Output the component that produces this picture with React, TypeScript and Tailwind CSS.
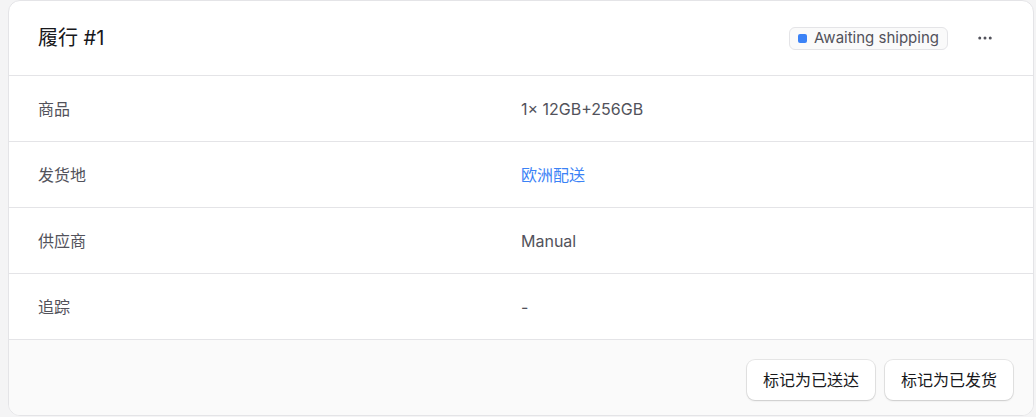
import React from 'react';
import { MoreHorizontal } from 'lucide-react';

const rows: { label: string; value: string; link?: boolean }[] = [
  { label: '商品', value: '1× 12GB+256GB' },
  { label: '发货地', value: '欧洲配送', link: true },
  { label: '供应商', value: 'Manual' },
  { label: '追踪', value: '-' },
];

export default function App() {
  return (
    <div
      className="min-h-screen bg-[#f4f4f5] pl-2 pr-[2px]"
      style={{ fontFamily: 'Inter, "Noto Sans CJK SC", sans-serif' }}
    >
      <div className="bg-white rounded-xl border border-[#e4e4e7] overflow-hidden h-[416px] flex flex-col">
        {/* Header */}
        <div className="h-[75px] flex items-center justify-between pl-[29px] pr-[34px] border-b border-[#e4e4e7]">
          <h2 className="text-[20px] text-[#18181b]">履行 #1</h2>
          <div className="flex items-center gap-[23px]">
            <div className="flex items-center gap-[7px] h-[23px] px-[8px] rounded-md border border-[#e4e4e7] bg-[#fafafa]">
              <span className="w-[9px] h-[9px] rounded-[2px] bg-[#3b82f6]" />
              <span className="text-[15px] text-[#52525b]">Awaiting shipping</span>
            </div>
            <button className="w-[28px] h-[28px] flex items-center justify-center text-[#52525b]">
              <MoreHorizontal size={18} strokeWidth={2} />
            </button>
          </div>
        </div>

        {/* Rows */}
        {rows.map((row) => (
          <div
            key={row.label}
            className="grid grid-cols-2 h-[66px] items-center px-[29px] border-b border-[#e4e4e7] text-[16px]"
          >
            <span className="text-[#52525b]">{row.label}</span>
            <span className={row.link ? 'text-[#3b82f6]' : 'text-[#52525b]'}>{row.value}</span>
          </div>
        ))}

        {/* Footer */}
        <div className="flex-1 bg-[#fafafa] flex items-start justify-end gap-[10px] pt-[20px] pr-[20px]">
          <button className="h-[40px] px-[16px] rounded-lg bg-white text-[16px] text-[#18181b] shadow-[0_0_0_1px_rgba(0,0,0,0.08),0_1px_2px_rgba(0,0,0,0.12)]">
            标记为已送达
          </button>
          <button className="h-[40px] px-[16px] rounded-lg bg-white text-[16px] text-[#18181b] shadow-[0_0_0_1px_rgba(0,0,0,0.08),0_1px_2px_rgba(0,0,0,0.12)]">
            标记为已发货
          </button>
        </div>
      </div>
    </div>
  );
}
